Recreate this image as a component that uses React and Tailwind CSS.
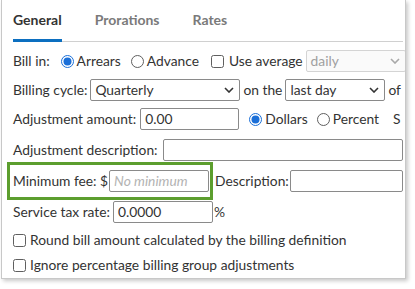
const TABS = ['General', 'Prorations', 'Rates'];

function Radio({ checked }) {
  return (
    <svg width="13" height="13" viewBox="0 0 13 13" className="shrink-0">
      <circle cx="6.5" cy="6.5" r="6" fill="#fff" stroke={checked ? '#1a6fd8' : '#5f5f5f'} strokeWidth="1" />
      {checked && <circle cx="6.5" cy="6.5" r="4" fill="#1a6fd8" />}
    </svg>
  );
}

function Checkbox() {
  return (
    <svg width="13" height="13" viewBox="0 0 13 13" className="shrink-0">
      <rect x="0.5" y="0.5" width="12" height="12" rx="2" fill="#fff" stroke="#5f5f5f" strokeWidth="1" />
    </svg>
  );
}

function Chevron({ color = '#333' }) {
  return (
    <svg width="10" height="6" viewBox="0 0 10 6" className="shrink-0">
      <path d="M1 1l4 4 4-4" fill="none" stroke={color} strokeWidth="1.6" />
    </svg>
  );
}

function Select({ value, width, disabled }) {
  return (
    <div
      className={`h-[22px] flex items-center justify-between pl-[4px] pr-[5px] rounded-[2px] border ${
        disabled ? 'border-[#d4d4d4] bg-[#fafafa] text-[#a0a0a0]' : 'border-[#8a8a8a] bg-white'
      } ${width}`}
    >
      <span>{value}</span>
      <Chevron color={disabled ? '#a8a8a8' : '#333'} />
    </div>
  );
}

function Input({ value, placeholder, width }) {
  return (
    <div className={`h-[22px] flex items-center px-[4px] rounded-[2px] border border-[#8a8a8a] bg-white ${width}`}>
      {value ? <span>{value}</span> : <span className="italic text-[#b3b3b3]">{placeholder}</span>}
    </div>
  );
}

export default function App() {
  return (
    <div className="w-[415px] h-[289px] bg-white font-[Lato,'Liberation_Sans',sans-serif] text-[13.8px] leading-[18px] text-[#333]">
      <div className="ml-[1px] w-[405px] h-[279px] border-x border-b border-[#c8c8c8] shadow-[2px_2px_4px_rgba(0,0,0,0.22)] bg-white">
        <div className="pl-[11px] pr-[2px] overflow-hidden whitespace-nowrap">
          {/* Tabs */}
          <div className="h-[42px] flex gap-[33px] border-b border-[#d0d0d0] text-[14px] font-bold">
            {TABS.map((t, i) => (
              <div
                key={t}
                className={`pt-[11px] ${i === 0 ? 'text-[#333] border-b-[3px] border-[#0c6fc0] -mb-px' : 'text-[#7a7a7a]'}`}
              >
                {t}
              </div>
            ))}
          </div>

          {/* Bill in */}
          <div className="mt-[5px] h-[28px] flex items-center">
            <span>Bill in:</span>
            <span className="ml-[11px]"><Radio checked /></span>
            <span className="ml-[3px]">Arrears</span>
            <span className="ml-[10px]"><Radio /></span>
            <span className="ml-[3px]">Advance</span>
            <span className="ml-[12px]"><Checkbox /></span>
            <span className="ml-[5px]">Use average</span>
            <span className="ml-[3px]"><Select value="daily" width="w-[100px]" disabled /></span>
          </div>

          {/* Billing cycle */}
          <div className="mt-[1px] h-[28px] flex items-center">
            <span>Billing cycle:</span>
            <span className="ml-[3px]"><Select value="Quarterly" width="w-[150px]" /></span>
            <span className="ml-[3px]">on the</span>
            <span className="ml-[3px]"><Select value="last day" width="w-[100px]" /></span>
            <span className="ml-[3px]">of</span>
          </div>

          {/* Adjustment amount */}
          <div className="mt-[1px] h-[28px] flex items-center">
            <span>Adjustment amount:</span>
            <span className="ml-[4px]"><Input value="0.00" width="w-[99px]" /></span>
            <span className="ml-[10px]"><Radio checked /></span>
            <span className="ml-[3px]">Dollars</span>
            <span className="ml-[9px]"><Radio /></span>
            <span className="ml-[3px]">Percent</span>
            <span className="ml-[14px]">S</span>
          </div>

          {/* Adjustment description */}
          <div className="mt-[5px] h-[24px] flex items-center">
            <span>Adjustment description:</span>
            <span className="ml-[5px] flex-1"><Input width="w-full" /></span>
          </div>

          {/* Minimum fee */}
          <div className="h-[38px] flex items-center">
            <div className="-ml-[6px] h-[38px] flex items-center pl-[3px] pr-[1px] border-[3px] border-[#5c9e2e]">
              <span>Minimum fee: $</span>
              <span className="ml-px"><Input placeholder="No minimum" width="w-[100px]" /></span>
            </div>
            <span className="ml-[2px]">Description:</span>
            <span className="ml-px flex-1"><Input width="w-full" /></span>
          </div>

          {/* Service tax rate */}
          <div className="mt-px h-[22px] flex items-center">
            <span>Service tax rate:</span>
            <span className="ml-[3px]"><Input value="0.0000" width="w-[100px]" /></span>
            <span className="ml-px">%</span>
          </div>

          <div className="mt-[5px] h-[24px] flex items-center">
            <Checkbox />
            <span className="ml-[4px]">Round bill amount calculated by the billing definition</span>
          </div>

          <div className="mt-px h-[24px] flex items-center">
            <Checkbox />
            <span className="ml-[4px]">Ignore percentage billing group adjustments</span>
          </div>
        </div>
      </div>
    </div>
  );
}
